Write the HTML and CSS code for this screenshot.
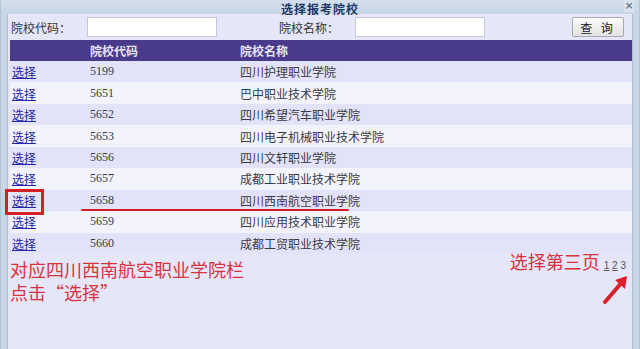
FILE: index.html
```html
<!DOCTYPE html>
<html>
<head>
  <link rel="stylesheet" href="styles.css">
<meta charset="utf-8">
<title>选择报考院校</title>
</head>
<body>
<div class="dialog">
  <div class="titlebar">
    <span class="title">选择报考院校</span>
    <span class="close">&#215;</span>
  </div>

  <div class="content">
    <div class="searchrow">
      <span class="label">院校代码：</span>
      <input type="text" class="field">
      <span class="label label2">院校名称：</span>
      <input type="text" class="field">
      <button class="button">查 询</button>
    </div>

    <table class="grid">
      <tr class="head">
        <th class="c1"></th>
        <th class="c2">院校代码</th>
        <th>院校名称</th>
      </tr>
      <tr class="odd"><td class="c1"><a href="#">选择</a></td><td class="c2">5199</td><td>四川护理职业学院</td></tr>
      <tr class="even"><td class="c1"><a href="#">选择</a></td><td class="c2">5651</td><td>巴中职业技术学院</td></tr>
      <tr class="odd"><td class="c1"><a href="#">选择</a></td><td class="c2">5652</td><td>四川希望汽车职业学院</td></tr>
      <tr class="even"><td class="c1"><a href="#">选择</a></td><td class="c2">5653</td><td>四川电子机械职业技术学院</td></tr>
      <tr class="odd"><td class="c1"><a href="#">选择</a></td><td class="c2">5656</td><td>四川文轩职业学院</td></tr>
      <tr class="even"><td class="c1"><a href="#">选择</a></td><td class="c2">5657</td><td>成都工业职业技术学院</td></tr>
      <tr class="odd"><td class="c1"><a href="#">选择</a></td><td class="c2">5658</td><td>四川西南航空职业学院</td></tr>
      <tr class="even"><td class="c1"><a href="#">选择</a></td><td class="c2">5659</td><td>四川应用技术职业学院</td></tr>
      <tr class="odd"><td class="c1"><a href="#">选择</a></td><td class="c2">5660</td><td>成都工贸职业技术学院</td></tr>
    </table>

    <div class="footer">
      <div class="notes">
        <div class="note">对应四川西南航空职业学院栏</div>
        <div class="note">点击“选择”</div>
      </div>
      <div class="pagebox">
        <span class="note">选择第三页</span>
        <span class="pager"><a href="#">1</a> <a href="#">2</a> <span>3</span></span>
      </div>
    </div>
  </div>

  <!-- marks drawn over the screenshot -->
  <div class="mark-box"></div>
  <div class="mark-line"></div>
  <svg class="mark-arrow" width="34" height="36" viewBox="0 0 34 36">
    <path d="M6 31 L24 10" stroke="#d9202a" stroke-width="4" stroke-linecap="round" fill="none"/>
    <path d="M16 9 L28 5 L26 18 Z" fill="#d9202a"/>
  </svg>
</div>
</body>
</html>
```

FILE: styles.css
```css
html, body {
  margin: 0;
  padding: 0;
}

body {
  width: 640px;
  height: 349px;
  overflow: hidden;
  font-family: "Noto Sans CJK SC", "Noto Sans", sans-serif;
  font-size: 12px;
}

.dialog {
  position: relative;
  height: 349px;
  background: #c9d6e5; /* window frame */
  border-left: 1px solid #b4c3d6;
  border-right: 1px solid #b4c3d6;
  box-sizing: border-box;
}

.titlebar {
  height: 14px;
  position: relative;
  text-align: center;
  background: linear-gradient(#d3dfec, #c8d5e5);
}

.title {
  font-weight: bold;
  font-size: 12px;
  line-height: 12px;
  color: #1f3a66;
  letter-spacing: 1px;
  display: inline-block;
  margin-top: -1px;
}

.close {
  position: absolute;
  right: 5px;
  top: 0;
  width: 10px;
  height: 12px;
  line-height: 12px;
  font-family: "DejaVu Sans", sans-serif;
  font-size: 11px;
  text-align: center;
  color: #4e5f78;
  background: #dbe4ef;
}

.content {
  margin: 0 6px 0 6px;
  height: 335px;
  background: #e6e6f9;
  border-left: 1px solid #aebfd3;
  border-right: 1px solid #aebfd3;
  padding: 0 0 0 2px;
  box-sizing: border-box;
}

/* search row */
.searchrow {
  height: 26px;
  display: flex;
  align-items: center;
}

.label {
  color: #333;
  width: 76px;
  padding-left: 1px;
}

.label2 {
  margin-left: 61px;
}

.field {
  width: 130px;
  height: 20px;
  box-sizing: border-box;
  margin: 0;
  border: 1px solid #c7c7d4;
  background: white;
}

.button {
  margin-left: auto;
  margin-right: 8px;
  width: 52px;
  height: 20px;
  padding: 0;
  font-family: inherit;
  font-size: 12px;
  letter-spacing: 3px;
  color: #222;
  background: linear-gradient(#fbfbfb, #e2e2e2);
  border: 1px solid #a9a9b4;
  border-radius: 2px;
}

/* result grid */
.grid {
  width: 622px;
  border-collapse: collapse;
}

.grid th, .grid td {
  padding: 0;
  text-align: left;
  white-space: nowrap;
}

.head {
  height: 21px;
  background: #4a3a8b;
}

.head th {
  color: #e6e4f6;
  font-weight: bold;
  font-size: 12px;
}

.grid tr.odd, .grid tr.even {
  height: 21.45px;
}

.odd { background: #e2e2f8; }
.even { background: #f3f3fb; }

.c1 {
  width: 78px;
  padding-left: 2px !important;
}

.c2 {
  width: 150px;
}

td.c2 {
  font-family: "Liberation Serif", serif;
  font-size: 12px;
  color: #7a7a86;
}

.grid td {
  color: #3a3a44;
}

.grid a {
  color: #2424a8;
}

/* notes under the grid */
.footer {
  display: flex;
  justify-content: space-between;
  align-items: flex-start;
}

.note {
  color: #d7333f;
  font-size: 18px;
  line-height: 23px;
  height: 23px;
}

.notes {
  padding-top: 4px;
}

.pagebox {
  margin-top: -4px;
  margin-right: 6px;
  display: flex;
  align-items: baseline;
}

.pager {
  margin-left: 4px;
  font-family: "Liberation Sans", sans-serif;
  font-size: 10px;
  color: #555;
}

.pager a {
  color: #555;
}

.mark-box {
  position: absolute;
  left: 4px;
  top: 189px;
  width: 33px;
  height: 20px;
  border: 3px solid #d51f26;
}

.mark-line {
  position: absolute;
  left: 80px;
  top: 209px;
  width: 268px;
  height: 2px;
  background: #d51f26;
  border-radius: 1px;
}

.mark-arrow {
  position: absolute;
  left: 598px;
  top: 271px;
}
```
